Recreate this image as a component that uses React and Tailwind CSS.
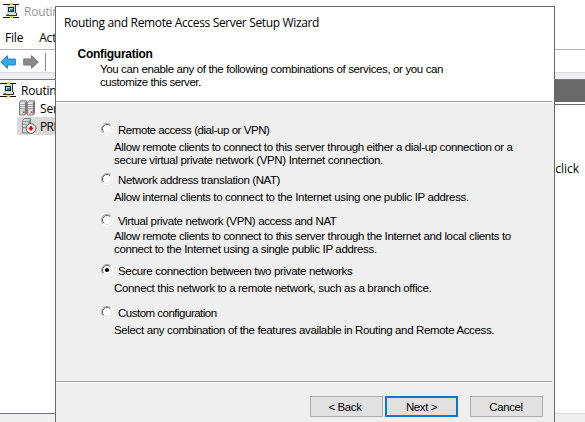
import React from "react";

const sans = "font-['Liberation_Sans',Arial,sans-serif]";
const segoe = "font-['Open_Sans','Noto_Sans',sans-serif]";

function RouterIcon() {
  return (
    <svg className="block h-4 w-4 shrink-0" viewBox="0 0 16 16" shapeRendering="crispEdges">
      <path d="M0 1h16v1H0zM0 14h16v1H0z" fill="#111" />
      <path d="M7 0h3v2H7zM7 13h3v2H7z" fill="#e6d800" />
      <path d="M4 2h9v9H4z" fill="#333" />
      <path d="M4 2h8v8H4z" fill="#d8d8d8" />
      <path d="M5 4h6v5H5z" fill="#122" />
      <path d="M6 5h4v3H6z" fill="#9bdcd6" />
      <path d="M7 6h3v2H7z" fill="#179c94" />
      <path d="M3 10h11v3H3z" fill="#333" />
      <path d="M3 10h10v2H3z" fill="#ddd" />
      <path d="M4 11h2v1H4z" fill="#19a070" />
    </svg>
  );
}

function ServersIcon() {
  return (
    <svg className="block h-4 w-4 shrink-0" viewBox="0 0 16 16">
      {[0, 8].map((x) => (
        <g key={x} transform={`translate(${x} 0)`}>
          <path d="M.5 2.5 2 .8h5.500v12.200l-1.500 2H.5z" fill="#d4d4d4" stroke="#666" strokeWidth=".8" />
          <path d="M5.800 3v12l1.700-2V1z" fill="#777" />
          <path d="M1 4.500h4.500M1 6.500h4.500M1 8.500h4.500" stroke="#888" strokeWidth=".7" />
          <path d="M1 3.500h4.500M1 5.500h4.500M1 7.500h4.500" stroke="#fff" strokeWidth=".7" />
          <path d="M4 11.500h1.400v1.400H4z" fill="#f02020" />
        </g>
      ))}
    </svg>
  );
}

function StoppedServerIcon() {
  return (
    <svg className="block h-4 w-4 shrink-0" viewBox="0 0 16 16">
      <path d="M1.500 2.500 3.500.500h6v12l-2 2.500h-6z" fill="#d4d4d4" stroke="#666" strokeWidth=".8" />
      <path d="M7.500 3v12l2-2.500V1z" fill="#888" />
      <path d="M2 3.500h5M2 6.500h4M2 9.500h3" stroke="#888" strokeWidth=".8" />
      <circle cx="10" cy="10.500" r="4.900" fill="#fff" stroke="#333" strokeWidth=".8" />
      <path d="M9 8h2v1.500h1.500v1L10 13 7.500 10.500v-1H9z" fill="#f00000" />
    </svg>
  );
}

function Arrow({ fill, stroke, flip }) {
  return (
    <svg className="block h-4 w-4 shrink-0" viewBox="0 0 16 16">
      <path
        d="M.7 8 7.500 1.700v3.300h7.800v6H7.500v3.300z"
        fill={fill}
        stroke={stroke}
        transform={flip ? "translate(16 0) scale(-1 1)" : undefined}
      />
    </svg>
  );
}

function Radio({ checked }) {
  return (
    <svg className="mt-px block h-3 w-3 shrink-0" viewBox="0 0 12 12">
      <circle cx="6" cy="6" r="5" fill="#fff" />
      <path d="M2.100 9.900A5.500 5.500 0 0 1 9.900 2.100" fill="none" stroke="#a0a0a0" />
      <path d="M2.800 9.200A4.500 4.500 0 0 1 9.200 2.800" fill="none" stroke="#696969" />
      <path d="M9.900 2.100A5.500 5.500 0 0 1 2.100 9.900" fill="none" stroke="#fff" />
      <path d="M9.200 2.800A4.500 4.500 0 0 1 2.800 9.200" fill="none" stroke="#e3e3e3" />
      {checked && <circle cx="6" cy="6" r="2.100" fill="#000" />}
    </svg>
  );
}

function Option({ label, labelClass, lines, checked, className, gap }) {
  return (
    <div className={className}>
      <div className="flex h-[13px] items-start">
        <Radio checked={checked} />
        <span className={`ml-[5px] mt-[2px] ${labelClass}`}>{label}</span>
      </div>
      <div className={`ml-[13px] ${gap}`}>
        {lines.map(([text, cls]) => (
          <div key={text} className={`h-[13px] ${cls}`}>{text}</div>
        ))}
      </div>
    </div>
  );
}

const options = [
  {
    label: "Remote access (dial-up or VPN)", labelClass: "tracking-[-0.45px]", className: "h-[50px]", gap: "mt-[6px]",
    lines: [
      ["Allow remote clients to connect to this server through either a dial-up connection or a", "tracking-[-0.37px]"],
      ["secure virtual private network (VPN) Internet connection.", "tracking-[-0.34px]"],
    ],
  },
  {
    label: "Network address translation (NAT)", labelClass: "tracking-[-0.41px]", className: "h-[41px]", gap: "mt-[6px]",
    lines: [["Allow internal clients to connect to the Internet using one public IP address.", "tracking-[-0.35px]"]],
  },
  {
    label: "Virtual private network (VPN) access and NAT", labelClass: "tracking-[-0.37px]", className: "h-[50px]", gap: "mt-[4px]",
    lines: [
      ["Allow remote clients to connect to this server through the Internet and local clients to", "tracking-[-0.365px]"],
      ["connect to the Internet using a single public IP address.", "tracking-[-0.345px]"],
    ],
  },
  {
    label: "Secure connection between two private networks", labelClass: "tracking-[-0.34px]", className: "h-[42px]", gap: "mt-[6px]", checked: true,
    lines: [["Connect this network to a remote network, such as a branch office.", "tracking-[-0.34px]"]],
  },
  {
    label: "Custom configuration", labelClass: "tracking-[-0.5px]", className: "h-[42px]", gap: "mt-[6px]",
    lines: [["Select any combination of the features available in Routing and Remote Access.", "tracking-[-0.355px]"]],
  },
];

function Wizard() {
  return (
    <div className={`absolute left-[55px] top-[6px] flex h-[416px] w-[500px] flex-col border-x border-t border-[#696969] bg-[#efefef] text-[11.5px] leading-[13px] text-black ${sans}`}>
      <div className="h-[94px] shrink-0 whitespace-nowrap bg-white">
        <div className={`ml-2 pt-[7px] text-[12px] leading-[18px] tracking-[-0.35px] ${segoe}`}>Routing and Remote Access Server Setup Wizard</div>
        <div className="ml-[21.5px] mt-[16px] text-[12px] font-bold leading-[13px] tracking-[-0.27px]">Configuration</div>
        <div className="ml-[44px] mt-[2px] tracking-[-0.37px]">You can enable any of the following combinations of services, or you can</div>
        <div className="ml-[44px] tracking-[-0.44px]">customize this server.</div>
      </div>
      <div className="mr-[2px] h-[2px] shrink-0 border-b border-t border-b-white border-t-[#a0a0a0]" />
      <div className="flex-1 whitespace-nowrap pl-[45px] pt-[19px]">
        {options.map((o) => <Option key={o.label} {...o} />)}
      </div>
      <div className="mr-[2px] h-[2px] shrink-0 border-b border-t border-b-white border-t-[#a0a0a0]" />
      <div className="flex h-[39px] shrink-0 justify-end pr-[11px] pt-[13px] tracking-[-0.4px]">
        <button className="h-[21px] w-[73px] border border-[#adadad] bg-[#e1e1e1] pr-[3px] pt-px">&lt; Back</button>
        <button className="ml-[2px] h-[21px] w-[73px] border-2 border-[#0078d7] bg-[#e1e1e1] pt-px">Next &gt;</button>
        <button className="ml-[12px] h-[21px] w-[73px] border border-[#adadad] bg-[#e1e1e1] pr-px pt-px">Cancel</button>
      </div>
    </div>
  );
}

export default function App() {
  return (
    <div className={`relative flex h-[422px] w-[585px] flex-col overflow-hidden whitespace-nowrap bg-white text-[12px] leading-4 tracking-[-0.2px] text-black ${segoe}`}>
      <div className="flex h-[25px] shrink-0 items-start pl-[3px] pt-[3px]">
        <RouterIcon />
        <span className="ml-[5px] mt-px text-[#999]">Routing</span>
      </div>
      <div className="flex h-[25px] shrink-0 items-start border-b border-[#b4b4c0] pl-[5px] pt-[5px]">
        <span>File</span>
        <span className="ml-[16px]">Action</span>
      </div>
      <div className="flex h-[22px] shrink-0 items-center pt-[2px]">
        <Arrow fill="#35a8e8" stroke="#2480bd" />
        <div className="ml-[7px]"><Arrow fill="#8b8b8b" stroke="#777" flip /></div>
        <div className="ml-[6px] h-[18px] w-px bg-[#8d8d8d]" />
      </div>
      <div className="h-[8px] shrink-0 border-b border-t border-b-[#77777f] border-t-[#d9d9d9] bg-[#efefef]" />
      <div className="flex h-[334px] shrink-0">
        <div className="w-[300px] shrink-0 border-b border-[#77778a] pt-px">
          <div className="flex h-[18px] items-center"><RouterIcon /><span className="ml-[5px] mt-[2px]">Routing</span></div>
          <div className="flex h-[18px] items-center pl-[19px]"><ServersIcon /><span className="ml-[5px] mt-[2px]">Server</span></div>
          <div className="ml-[17px] flex h-[18px] items-center bg-[#d9d9d9] pl-1"><StoppedServerIcon /><span className="ml-[3px] mt-[2px] tracking-[-0.6px]">PRI</span></div>
        </div>
        <div className="flex-1 border-b border-[#d9d9d9]">
          <div className="h-[22px] bg-[#696969]" />
          <div className="mt-[2px] h-px bg-[#696969]" />
          <div className="mt-[55px] pr-[6px] text-right text-[12px] leading-[18px] tracking-normal">click</div>
        </div>
      </div>
      <div className="flex-1 bg-[#efefef]" />
      <Wizard />
    </div>
  );
}
